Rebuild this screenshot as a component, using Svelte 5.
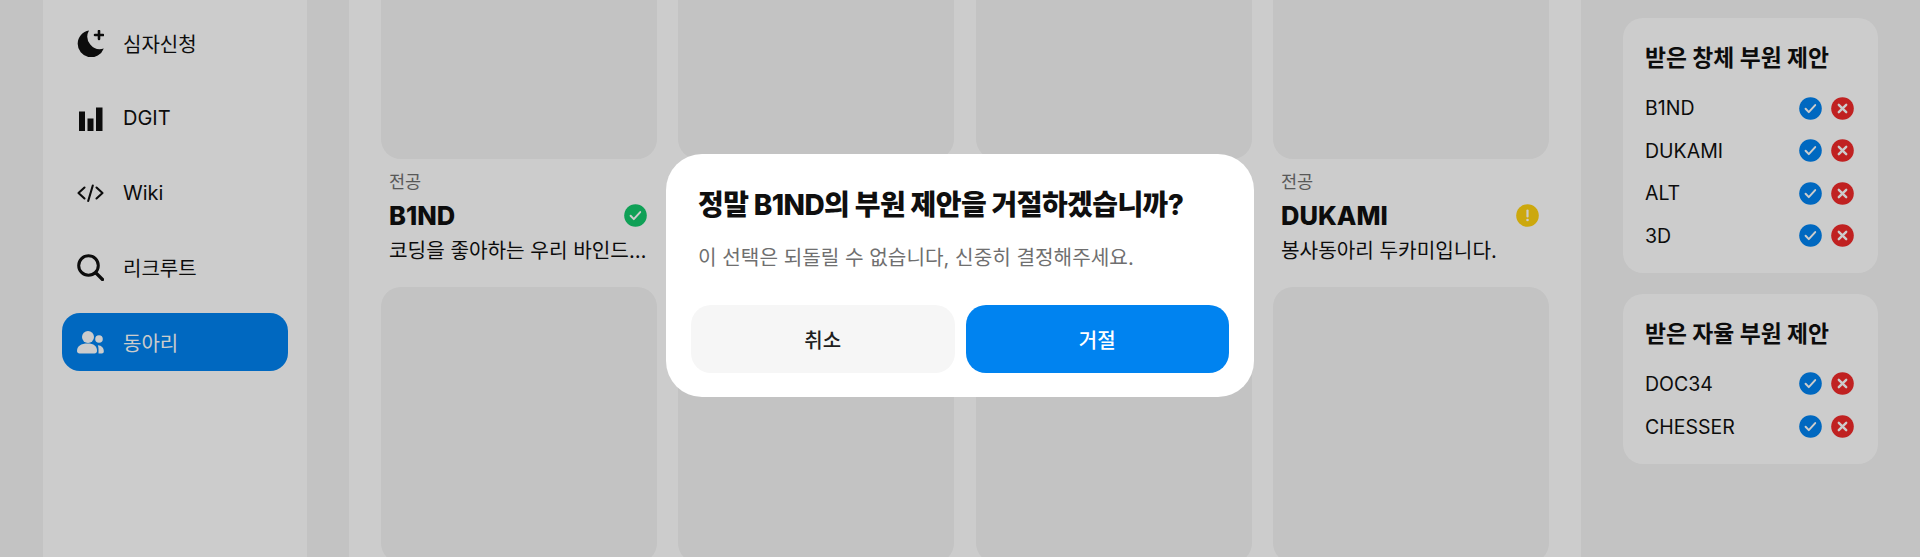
<script lang="ts">
  const navItems = [
    { label: '심자신청', icon: 'moon' },
    { label: 'DGIT', icon: 'bars' },
    { label: 'Wiki', icon: 'code' },
    { label: '리크루트', icon: 'search' },
    { label: '동아리', icon: 'users', active: true }
  ];

  // middle columns sit behind the modal, so only the outer ones carry text
  const clubs = [
    { name: 'B1ND', desc: '코딩을 좋아하는 우리 바인드 동아리입니다.', status: 'ok' },
    { name: '', desc: '', status: '' },
    { name: '', desc: '', status: '' },
    { name: 'DUKAMI', desc: '봉사동아리 두카미입니다.', status: 'wait' }
  ];

  const offers = [
    { title: '받은 창체 부원 제안', names: ['B1ND', 'DUKAMI', 'ALT', '3D'] },
    { title: '받은 자율 부원 제안', names: ['DOC34', 'CHESSER'] }
  ];
</script>

{#snippet check()}
  <path d="M6.600 11.800l3.200 3.300 6.400-7" fill="none" stroke="#fff" stroke-width="2" stroke-linecap="round" stroke-linejoin="round" />
{/snippet}

<div class="page">
  <aside class="sidebar">
    <nav>
      {#each navItems as item}
        <div class="nav-item" class:active={item.active}>
          <svg class="nav-icon" viewBox="0 0 27 27" aria-hidden="true">
            {#if item.icon === 'moon'}
              <path d="M12 .5A13.500 13.500 0 1 0 26.800 18.600 12.600 12.600 0 0 1 12 .5Z" fill="currentColor" />
              <path d="M22 1v8M18 5h8" stroke="currentColor" stroke-width="2.600" stroke-linecap="round" />
            {:else if item.icon === 'bars'}
              <path d="M2 7.500h6V27H2zM10.500 14.500h6V27h-6zM19 3.500h6.500V27H19z" fill="currentColor" />
            {:else if item.icon === 'code'}
              <path d="M7.500 8.500 1.500 14l6 5.500M19.500 8.500l6 5.500-6 5.500M15.800 6.500l-4.600 15.500" fill="none" stroke="currentColor" stroke-width="2.100" stroke-linecap="round" stroke-linejoin="round" />
            {:else if item.icon === 'search'}
              <circle cx="11.500" cy="11.500" r="9.800" fill="none" stroke="currentColor" stroke-width="3" />
              <path d="M19 19l6.500 6.500" stroke="currentColor" stroke-width="3.200" stroke-linecap="round" />
            {:else}
              <circle cx="11" cy="8" r="6" fill="currentColor" />
              <circle cx="22" cy="10" r="3.800" fill="currentColor" />
              <path d="M0 22c0-5 4-7.500 10.500-7.500S20 17 20 22c0 1.500-1 2.500-2.500 2.500h-15C1 24.500 0 23.500 0 22Z" fill="currentColor" />
              <path d="M21.500 24.500h3.300c1.200 0 2-.8 2-2 0-3.300-2-6-6-6.200 1 1.600.7 6 .7 8.200Z" fill="currentColor" />
            {/if}
          </svg>
          <span>{item.label}</span>
        </div>
      {/each}
    </nav>
  </aside>

  <main class="clubs">
    {#each clubs as club}
      <div class="club">
        <div class="thumb top"></div>
        <div class="info">
          {#if club.name}
            <small>전공</small>
            <div class="name-row">
              <strong>{club.name}</strong>
              <svg class="dot" viewBox="0 0 23 23" aria-hidden="true">
                {#if club.status === 'ok'}
                  <circle cx="11.500" cy="11.500" r="11.300" fill="#13c86c" />
                  {@render check()}
                {:else}
                  <circle cx="11.500" cy="11.500" r="11.300" fill="#ffd311" />
                  <path d="M11.500 6.500v6" stroke="#fff" stroke-width="2.200" stroke-linecap="round" />
                  <circle cx="11.500" cy="16" r="1.300" fill="#fff" />
                {/if}
              </svg>
            </div>
            <p>{club.desc}</p>
          {/if}
        </div>
        <div class="thumb"></div>
      </div>
    {/each}
  </main>

  <section class="offers">
    {#each offers as group}
      <div class="offer-card">
        <h2>{group.title}</h2>
        <ul>
          {#each group.names as name}
            <li>
              <span>{name}</span>
              <svg class="dot" viewBox="0 0 23 23" aria-hidden="true">
                <circle cx="11.500" cy="11.500" r="11.300" fill="#0083f0" />
                {@render check()}
              </svg>
              <svg class="dot" viewBox="0 0 23 23" aria-hidden="true">
                <circle cx="11.500" cy="11.500" r="11.300" fill="#f02a2a" />
                <path d="M7.800 7.800l7.400 7.400M15.200 7.800l-7.400 7.400" stroke="#fff" stroke-width="2.400" stroke-linecap="round" />
              </svg>
            </li>
          {/each}
        </ul>
      </div>
    {/each}
  </section>

  <div class="overlay">
    <div class="modal">
      <h1>정말 B1ND의 부원 제안을 거절하겠습니까?</h1>
      <p>이 선택은 되돌릴 수 없습니다, 신중히 결정해주세요.</p>
      <div class="actions">
        <button class="cancel">취소</button>
        <button class="confirm">거절</button>
      </div>
    </div>
  </div>
</div>

<style>
  :global(body) {
    margin: 0;
    font-family: Inter, 'Noto Sans CJK KR', sans-serif;
    color: #0f0f0f;
  }

  .page {
    position: relative;
    display: flex;
    height: 557px;
    overflow: hidden;
    background: #f4f4f4;
  }

  .sidebar {
    width: 264px;
    margin: 0 42px 0 43px;
    padding: 14px 19px 0;
    box-sizing: border-box;
    background: #fff;
  }

  nav {
    display: flex;
    flex-direction: column;
    gap: 16.750px;
  }

  .nav-item {
    display: flex;
    align-items: center;
    gap: 19px;
    height: 58px;
    padding-left: 15px;
    border-radius: 18px;
    font-size: 20px;
  }

  .nav-item.active {
    background: #0083f0;
    color: #fff;
  }

  .nav-icon {
    width: 27px;
    height: 27px;
    flex: none;
  }

  .clubs {
    display: grid;
    grid-template-columns: repeat(4, 1fr);
    column-gap: 21.330px;
    width: 1232px;
    flex: none;
    padding: 0 32px;
    box-sizing: border-box;
    background: #fff;
  }

  .club {
    min-width: 0;
  }

  .thumb {
    height: 276px;
    border-radius: 20px;
    background: #f4f4f4;
  }

  /* page is scrolled, the first row starts above the fold */
  .thumb.top {
    margin-top: -117px;
  }

  .info {
    height: 128px;
    padding: 13px 8px 0;
    box-sizing: border-box;
  }

  .info small {
    display: block;
    font-size: 17.500px;
    line-height: 20px;
    color: #6f6f6f;
  }

  .name-row {
    display: flex;
    justify-content: space-between;
    align-items: center;
    height: 30px;
    margin-top: 8px;
    padding-right: 2px;
  }

  .name-row strong {
    font-size: 25.500px;
    font-weight: 800;
  }

  .info p {
    margin: 9px 0 0;
    font-size: 20.200px;
    line-height: 24px;
    white-space: nowrap;
    overflow: hidden;
    text-overflow: ellipsis;
  }

  .dot {
    width: 23px;
    height: 23px;
    flex: none;
  }

  .offers {
    display: flex;
    flex-direction: column;
    gap: 21px;
    width: 255px;
    margin-left: 42px;
    padding-top: 18px;
  }

  .offer-card {
    padding: 24px 23px 25px 22px;
    border-radius: 20px;
    background: #fff;
  }

  .offer-card h2 {
    margin: 0 0 22px;
    font-size: 22.800px;
    font-weight: 700;
    line-height: 32px;
  }

  .offer-card ul {
    display: flex;
    flex-direction: column;
    gap: 18.670px;
    margin: 0;
    padding: 0;
    list-style: none;
  }

  .offer-card li {
    display: flex;
    align-items: center;
    gap: 9px;
    height: 24px;
    padding-right: 1px;
    font-size: 19.500px;
  }

  .offer-card li span {
    flex: 1;
  }

  .overlay {
    position: absolute;
    inset: 0;
    display: flex;
    justify-content: center;
    padding-top: 154px;
    background: rgba(0, 0, 0, 0.2);
  }

  .modal {
    width: 588px;
    height: 243px;
    padding: 35px 25px 24px;
    box-sizing: border-box;
    border-radius: 36px;
    background: #fff;
  }

  .modal h1 {
    margin: 0 7px;
    font-size: 28px;
    font-weight: 800;
    line-height: 32px;
    letter-spacing: -0.6px;
    white-space: nowrap;
  }

  .modal p {
    margin: 25px 7px 0;
    font-size: 20.200px;
    line-height: 24px;
    color: #6f6f6f;
  }

  .actions {
    display: flex;
    gap: 11px;
    margin-top: 35px;
  }

  .actions button {
    flex: 1;
    height: 68px;
    border: 0;
    border-radius: 20px;
    font: 500 20px Inter, 'Noto Sans CJK KR', sans-serif;
  }

  .cancel {
    background: #f6f6f6;
    color: #1e1e1e;
  }

  .confirm {
    background: #0083f0;
    color: #fff;
  }
</style>
